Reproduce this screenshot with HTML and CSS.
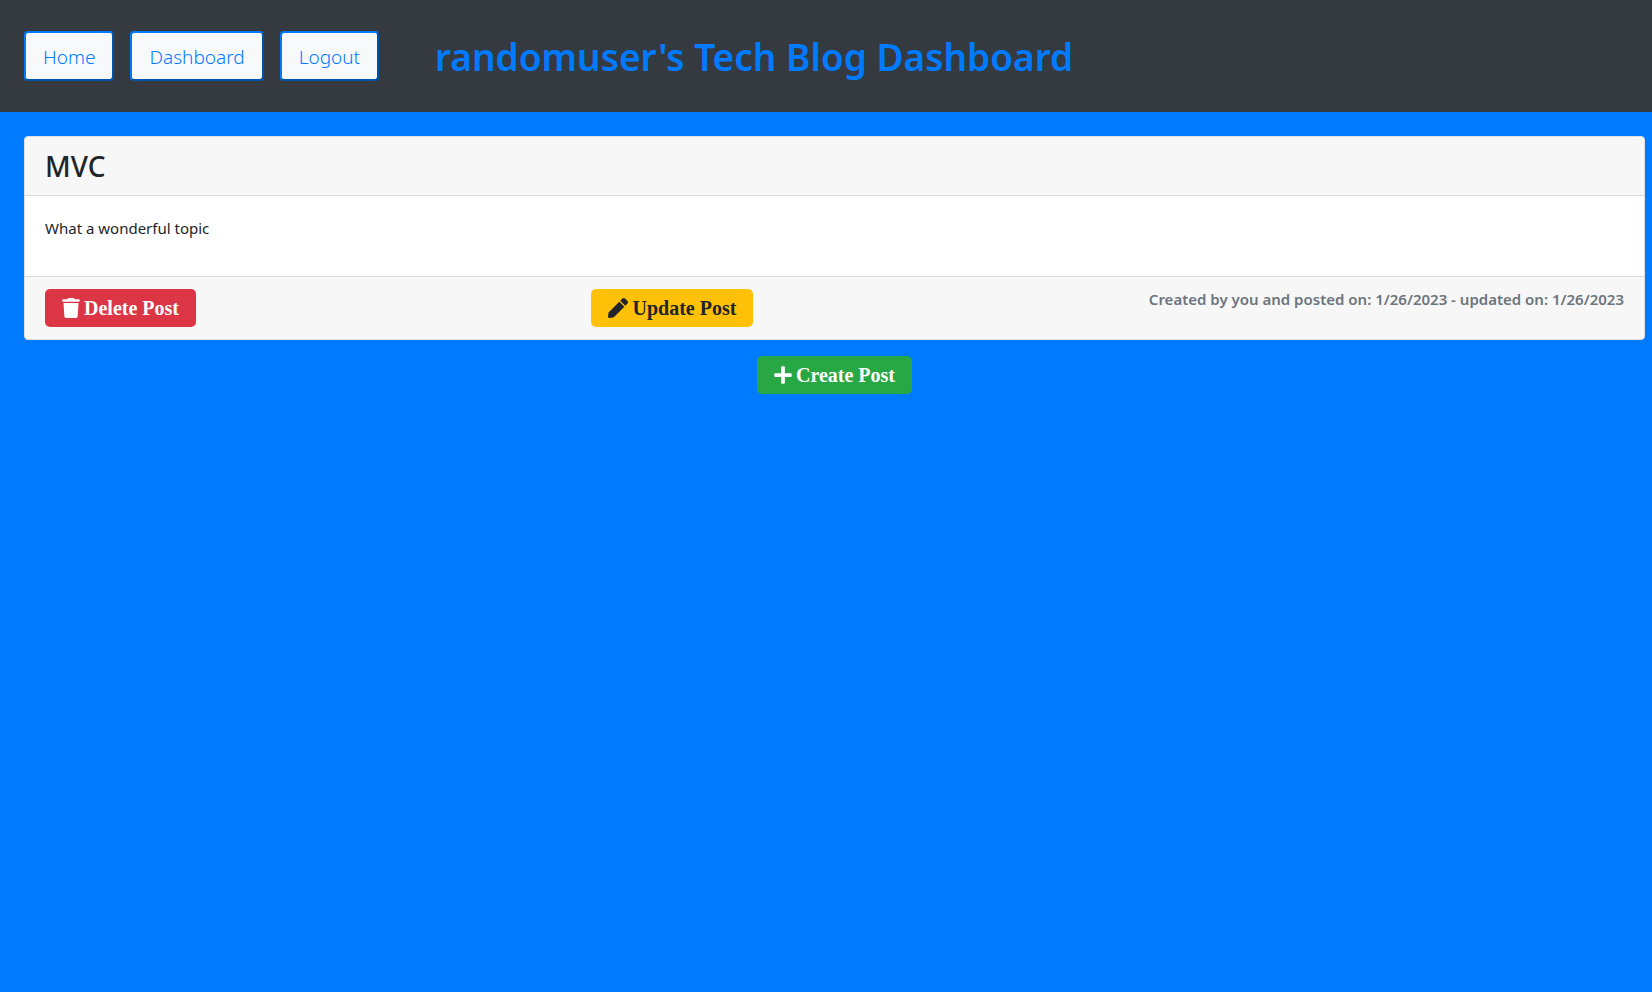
FILE: index.html
```html
<!DOCTYPE html>
<html lang="en">
<head>
<meta charset="utf-8">
<meta name="viewport" content="width=device-width, initial-scale=1">
<title>Tech Blog Dashboard</title>
<link rel="stylesheet" href="styles.css">
</head>
<body>
<header class="site-header">
  <nav class="nav">
    <button type="button" class="nav-btn">Home</button>
    <button type="button" class="nav-btn">Dashboard</button>
    <button type="button" class="nav-btn">Logout</button>
  </nav>
  <h1 class="site-title">randomuser's Tech Blog Dashboard</h1>
</header>
<main class="content">
  <article class="card">
    <h2 class="card-header">MVC</h2>
    <p class="card-body">What a wonderful topic</p>
    <footer class="card-footer">
      <button type="button" class="btn btn-danger"><svg class="icon" width="18" height="20" viewBox="0 0 448 512" aria-hidden="true"><path d="M135.200 17.700L128 32H32C14.300 32 0 46.300 0 64S14.300 96 32 96H416c17.700 0 32-14.300 32-32s-14.300-32-32-32H320l-7.200-14.300C307.400 6.800 296.300 0 284.200 0H163.800c-12.100 0-23.200 6.800-28.600 17.700zM416 128H32L53.200 467c1.600 25.300 22.600 45 47.900 45H346.900c25.300 0 46.300-19.700 47.900-45L416 128z"/></svg>Delete Post</button>
      <button type="button" class="btn btn-warning"><svg class="icon" width="20" height="20" viewBox="0 0 512 512" aria-hidden="true"><path d="M290.700 93.200l128 128-278 278-114.100 12.600C11.300 513.500-1.600 500.600.1 485.300l12.700-114.200 277.900-277.900zm207.200-19.100l-60.100-60.100c-18.700-18.700-49.100-18.700-67.900 0l-56.600 56.600 128 128 56.600-56.600c18.700-18.800 18.700-49.200 0-67.900z"/></svg>Update Post</button>
      <p class="meta">Created by you and posted on: 1/26/2023 - updated on: 1/26/2023</p>
    </footer>
  </article>
  <button type="button" class="btn btn-success"><svg class="icon" width="18" height="20" viewBox="0 0 448 512" aria-hidden="true"><path d="M416 208H272V64c0-17.700-14.300-32-32-32h-32c-17.700 0-32 14.300-32 32v144H32c-17.700 0-32 14.300-32 32v32c0 17.700 14.300 32 32 32h144v144c0 17.700 14.300 32 32 32h32c17.700 0 32-14.300 32-32V304h144c17.700 0 32-14.300 32-32v-32c0-17.700-14.300-32-32-32z"/></svg>Create Post</button>
</main>
</body>
</html>
```
FILE: styles.css
```css
* { box-sizing: border-box; }
body {
  margin: 0;
  background: #007bff;
  color: #212529;
  font: 16px/24px "Noto Sans", "Open Sans", sans-serif;
}
h1, h2, p { margin: 0; }
.site-header {
  display: flex;
  align-items: center;
  gap: 56px;
  padding: 24px;
  min-height: 112px;
  background: #343a40;
}
.nav { display: flex; gap: 16px; }
.nav-btn {
  padding: 9px 17px 7px;
  border: 2px outset #007bff;
  border-radius: 4px;
  background: #f8f9fa;
  color: #007bff;
  font: 300 19px/30px "Noto Sans", "Open Sans", sans-serif;
}
.site-title {
  padding-top: 2px;
  color: #007bff;
  font-size: 37px;
  font-weight: 600;
  line-height: 48px;
}
.content {
  display: flex;
  flex-direction: column;
  align-items: center;
  gap: 16px;
  padding: 24px 7px 24px 24px;
}
.card {
  align-self: stretch;
  border: 1px solid #dfdfdf;
  border-radius: 4px;
  background: #fff;
  overflow: hidden;
}
.card-header {
  padding: 12px 20px;
  border-bottom: 1px solid #d9d9d9;
  background: #f7f7f7;
  font-size: 28px;
  font-weight: 500;
  line-height: 34px;
}
.card-body { padding: 20px 20px 36px; font-size: 15px; }
.card-footer {
  display: flex;
  justify-content: space-between;
  align-items: flex-start;
  padding: 12px 20px;
  border-top: 1px solid #d9d9d9;
  background: #f7f7f7;
}
.meta {
  color: #6c757d;
  font-size: 15px;
  font-weight: 600;
  line-height: 20px;
}
.btn {
  display: inline-flex;
  align-items: center;
  gap: 4px;
  padding: 8px 17px;
  border: 0;
  border-radius: 5px;
  font: bold 20px/22px "Liberation Serif", "Times New Roman", serif;
}
.icon { fill: currentColor; }
.btn-danger { background: #dc3545; color: #fff; }
.btn-warning { background: #ffc107; color: #212529; }
.btn-success { background: #28a745; color: #fff; }
```
